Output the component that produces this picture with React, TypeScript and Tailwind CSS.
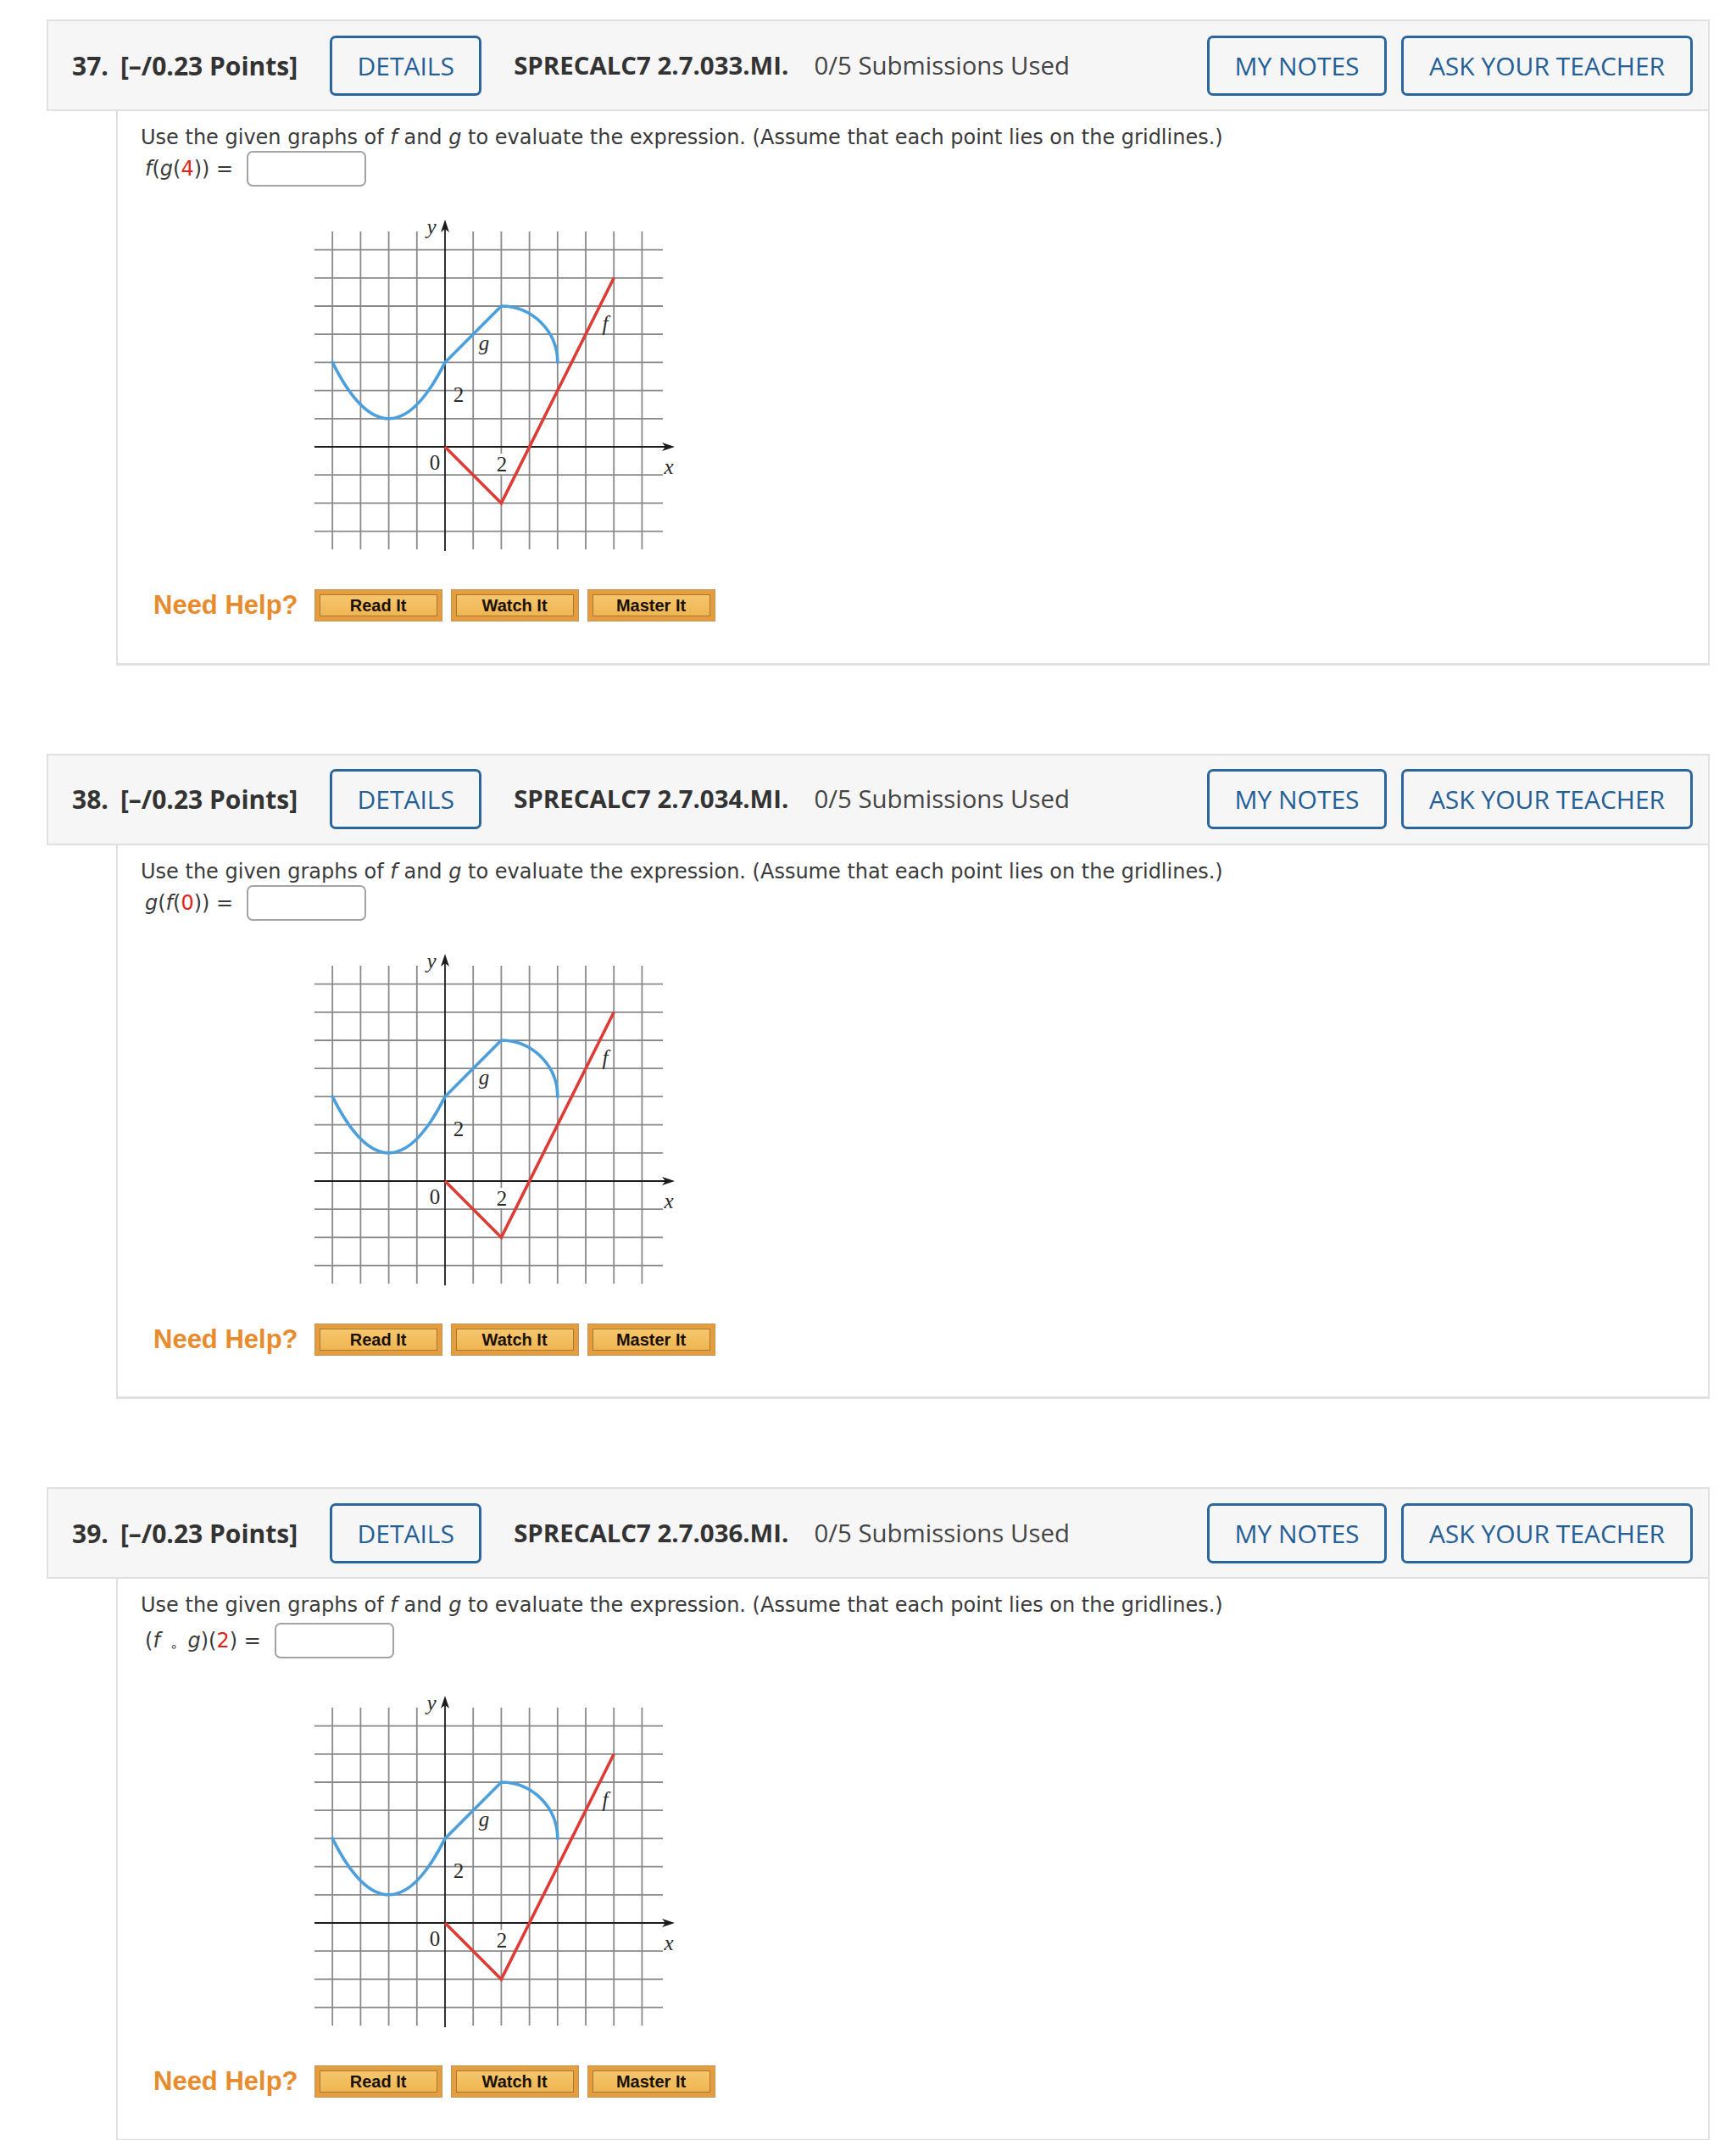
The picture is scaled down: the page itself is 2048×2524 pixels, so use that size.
import React from "react";

type Question = {
  num: number;
  code: string;
  expr: React.ReactNode;
  tall?: boolean;
};

const red = "text-[#e0241b]";

const questions: Question[] = [
  {
    num: 37,
    code: "SPRECALC7 2.7.033.MI.",
    expr: (
      <>
        <i>f</i>(<i>g</i>(<span className={red}>4</span>))
      </>
    ),
  },
  {
    num: 38,
    code: "SPRECALC7 2.7.034.MI.",
    expr: (
      <>
        <i>g</i>(<i>f</i>(<span className={red}>0</span>))
      </>
    ),
  },
  {
    num: 39,
    code: "SPRECALC7 2.7.036.MI.",
    tall: true,
    expr: (
      <>
        (<i>f</i> <span className="relative top-[4px] mx-[4px] text-[15px]">∘</span> <i>g</i>)(<span className={red}>2</span>)
      </>
    ),
  },
];

// grid graph of f (red) and g (blue), drawn in px of the screenshot
function Graph() {
  const u = 33.2;
  const ox = 166;
  const oy = 279;
  const X = (x: number) => ox + x * u;
  const Y = (y: number) => oy - y * u;
  const cols = [-4, -3, -2, -1, 1, 2, 3, 4, 5, 6, 7];
  const rows = [-3, -2, -1, 1, 2, 3, 4, 5, 6, 7];
  const serif = "'Liberation Serif', 'DejaVu Serif', serif";

  const g = `M ${X(-4)} ${Y(3)} Q ${X(-2)} ${Y(-1)} ${X(0)} ${Y(3)} L ${X(2)} ${Y(5)} A ${2 * u} ${2 * u} 0 0 1 ${X(4)} ${Y(3)}`;
  const f = `${X(0)},${Y(0)} ${X(2)},${Y(-2)} ${X(6)},${Y(6)}`;

  return (
    <svg width={440} height={405} viewBox="0 0 440 405" className="block">
      {cols.map((i) => (
        <line key={"c" + i} x1={X(i)} x2={X(i)} y1={25} y2={400} stroke="#8a8a8a" strokeWidth={1.8} />
      ))}
      {rows.map((j) => (
        <line key={"r" + j} x1={12} x2={423} y1={Y(j)} y2={Y(j)} stroke="#8a8a8a" strokeWidth={1.8} />
      ))}
      <line x1={12} x2={428} y1={oy} y2={oy} stroke="#1c1c1c" strokeWidth={1.8} />
      <polygon points={`437,${oy} 422,${oy - 5} 426,${oy} 422,${oy + 5}`} fill="#1c1c1c" />
      <line x1={ox} x2={ox} y1={402} y2={20} stroke="#1c1c1c" strokeWidth={1.8} />
      <polygon points={`${ox},11 ${ox - 5},26 ${ox},22 ${ox + 5},26`} fill="#1c1c1c" />

      <rect x={225} y={287} width={16} height={24} fill="#fff" />
      <g fontFamily={serif} fontSize={25} fill="#2a2a2a" textAnchor="middle" dominantBaseline="central">
        <text x={150} y={19} fontStyle="italic">y</text>
        <text x={430} y={302} fontStyle="italic">x</text>
        <text x={154} y={297}>0</text>
        <text x={233} y={299}>2</text>
        <text x={182} y={217}>2</text>
        <text x={212} y={156} fontStyle="italic">g</text>
        <text x={355} y={133} fontStyle="italic">f</text>
      </g>

      <path d={g} fill="none" stroke="#4a9fdc" strokeWidth={3.6} strokeLinecap="round" strokeLinejoin="round" />
      <polyline points={f} fill="none" stroke="#dc3b36" strokeWidth={3.6} strokeLinejoin="miter" />
    </svg>
  );
}

function HelpButton({ label }: { label: string }) {
  return (
    <div className="h-[38px] w-[151px] border border-[#c39458] bg-[#e49d3f] px-[5px] py-[5px]">
      <div className="flex h-full items-center justify-center border border-[#a9772f] bg-gradient-to-b from-[#f6c66c] to-[#efb552] font-['Liberation_Sans',Arial,sans-serif] text-[20px] font-bold leading-none text-[#1a1208]">
        {label}
      </div>
    </div>
  );
}

function OutlineButton({ label, w }: { label: string; w: string }) {
  return (
    <div
      className={`flex h-[71px] ${w} items-center justify-center rounded-[7px] border-[3px] border-[#2a659b] text-[30px] text-[#245f96]`}
    >
      {label}
    </div>
  );
}

function QuestionBlock({ q }: { q: Question }) {
  return (
    <div>
      <div className="flex h-[108px] items-center border-2 border-[#e0e0e0] bg-[#f6f6f6] pl-[28px] pr-[18px] font-['Open_Sans',sans-serif] text-[#333]">
        <span className="text-[30px] font-bold">{q.num}.</span>
        <span className="ml-[14px] text-[30px] font-bold">[–/0.23 Points]</span>
        <div className="ml-[38px]">
          <OutlineButton label="DETAILS" w="w-[179px]" />
        </div>
        <span className="ml-[38px] text-[29.4px] font-bold">{q.code}</span>
        <span className="ml-[30px] text-[29.4px] text-[#444]">0/5 Submissions Used</span>
        <div className="ml-auto flex gap-[17px]">
          <OutlineButton label="MY NOTES" w="w-[212px]" />
          <OutlineButton label="ASK YOUR TEACHER" w="w-[344px]" />
        </div>
      </div>
      <div className="ml-[82px] border-x-2 border-b-[3px] border-[#e0e0e0] pb-[44px] pl-[27px] pt-[17px] font-['DejaVu_Sans',Verdana,sans-serif] text-[24px] text-[#3a3a3a]">
        <p className="leading-[28px]">
          Use the given graphs of <i>f</i> and <i>g</i> to evaluate the expression. (Assume that each point lies on the gridlines.)
        </p>
        <div className={`flex items-center pl-[5px] ${q.tall ? "h-[56px]" : "h-[46px]"}`}>
          <span>{q.expr} =</span>
          <div className="ml-[16px] h-[42px] w-[141px] rounded-[7px] border-2 border-[#a3a3a3] bg-white" />
        </div>
        <div className="ml-[193px] mt-[26px]">
          <Graph />
        </div>
        <div className="mt-[38px] flex items-center pl-[15px]">
          <span className="mr-[19px] font-['Liberation_Sans',Arial,sans-serif] text-[31px] font-bold text-[#e88b2c]">Need Help?</span>
          <div className="flex gap-[10px]">
            <HelpButton label="Read It" />
            <HelpButton label="Watch It" />
            <HelpButton label="Master It" />
          </div>
        </div>
      </div>
    </div>
  );
}

export default function App() {
  return (
    <div className="min-h-[2524px] w-[2048px] overflow-hidden bg-white pl-[55px] pr-[31px] pt-[23px]">
      <div className="flex flex-col gap-[104px]">
        {questions.map((q) => (
          <QuestionBlock key={q.num} q={q} />
        ))}
      </div>
    </div>
  );
}
